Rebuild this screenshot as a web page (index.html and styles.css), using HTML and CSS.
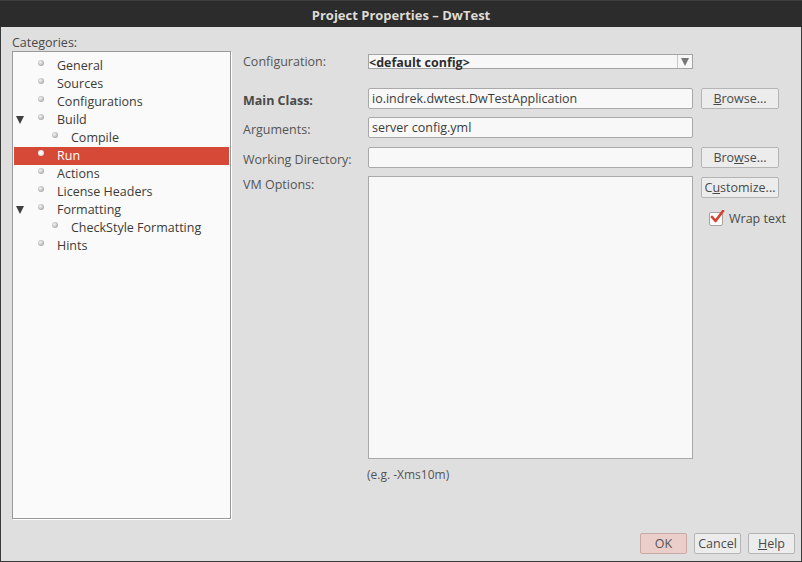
FILE: index.html
```html
<!DOCTYPE html>
<html>
<head>
<meta charset="utf-8">
<link rel="stylesheet" href="styles.css">
</head>
<body>
<div class="window">
  <div class="titlebar">Project Properties – DwTest</div>
  <div class="main">
    <div class="left">
      <div class="cat-label">Categories:</div>
      <div class="tree">
        <div class="node"><span class="exp"></span><span class="dot"></span>General</div>
        <div class="node"><span class="exp"></span><span class="dot"></span>Sources</div>
        <div class="node"><span class="exp"></span><span class="dot"></span>Configurations</div>
        <div class="node"><span class="exp open"></span><span class="dot"></span>Build</div>
        <div class="node child"><span class="exp"></span><span class="dot"></span>Compile</div>
        <div class="node sel"><span class="exp"></span><span class="dot"></span>Run</div>
        <div class="node"><span class="exp"></span><span class="dot"></span>Actions</div>
        <div class="node"><span class="exp"></span><span class="dot"></span>License Headers</div>
        <div class="node"><span class="exp open"></span><span class="dot"></span>Formatting</div>
        <div class="node child"><span class="exp"></span><span class="dot"></span>CheckStyle Formatting</div>
        <div class="node"><span class="exp"></span><span class="dot"></span>Hints</div>
      </div>
    </div>
    <div class="form">
      <div class="row r-config">
        <div class="label">Configuration:</div>
        <div class="combo"><span class="combo-text">&lt;default config&gt;</span><span class="combo-arrow"></span></div>
      </div>
      <div class="row r-main">
        <div class="label bold">Main Class:</div>
        <div class="field">io.indrek.dwtest.DwTestApplication</div>
        <button class="btn"><u>B</u>rowse...</button>
      </div>
      <div class="row r-args">
        <div class="label">Arguments:</div>
        <div class="field">server config.yml</div>
      </div>
      <div class="row r-work">
        <div class="label">Working Directory:</div>
        <div class="field"></div>
        <button class="btn">Bro<u>w</u>se...</button>
      </div>
      <div class="row r-vm">
        <div class="label top">VM Options:</div>
        <div class="area"></div>
        <div class="side">
          <button class="btn">C<u>u</u>stomize...</button>
          <label class="check"><span class="box"><svg width="16" height="14" viewBox="0 0 16 14"><path d="M3 7 L6.5 11 L14 1" fill="none" stroke="#d9412f" stroke-width="2.6" stroke-linecap="round" stroke-linejoin="round"/></svg></span>Wrap text</label>
        </div>
      </div>
      <div class="hint">(e.g. -Xms10m)</div>
    </div>
  </div>
  <div class="footer">
    <button class="btn fbtn ok">OK</button>
    <button class="btn fbtn">Cancel</button>
    <button class="btn fbtn"><u>H</u>elp</button>
  </div>
</div>
</body>
</html>
```

FILE: styles.css
```css
* { box-sizing: border-box; }
html, body { margin: 0; padding: 0; }
body {
  width: 802px;
  height: 562px;
  overflow: hidden;
  font-family: "Open Sans", "DejaVu Sans", sans-serif;
  font-size: 12.5px;
  color: #4a4a4a;
  background: #dfdfdf;
}
u { text-decoration: underline; text-underline-offset: 1px; }
.window {
  width: 802px;
  height: 562px;
  border: 1px solid #3a3a3a;
  border-top: none;
  background: #dfdfdf;
  display: flex;
  flex-direction: column;
}
.titlebar {
  height: 27px;
  margin: 0 -1px;
  background: #2c2c2c;
  border-top: 1px solid #3e3e3e;
  color: #dedbd4;
  font-weight: bold;
  font-size: 13px;
  display: flex;
  align-items: center;
  justify-content: center;
  padding-top: 1px;
}
.main {
  flex: 1;
  display: flex;
  padding: 8px 0 0 11px;
}
.left {
  width: 220px;
  display: flex;
  flex-direction: column;
}
.cat-label {
  height: 16px;
  line-height: 16px;
  color: #4a4a4a;
}
.tree {
  height: 468px;
  background: #fafafa;
  border: 1px solid #999;
  box-shadow: 1px 1px 0 #fff;
  padding: 5px 1px 0 1px;
  width: 219px;
}
.node {
  height: 18px;
  line-height: 18px;
  display: flex;
  align-items: center;
  color: #3c3b37;
  font-size: 12.5px;
}
.exp {
  width: 24px;
  flex: none;
  align-self: flex-start;
  height: 18px;
  display: block;
}
.exp.open::before {
  content: "";
  display: block;
  margin: 5px 0 0 2px;
  width: 0; height: 0;
  border-left: 4px solid transparent;
  border-right: 4px solid transparent;
  border-top: 8px solid #3f3f3f;
}
.dot {
  width: 6px;
  height: 6px;
  border-radius: 50%;
  background: radial-gradient(circle at 40% 40%, #f4f4f4 0, #bdbdbd 55%, #8a8a8a 100%);
  align-self: flex-start;
  margin-top: 3px;
  margin-right: 13px;
  flex: none;
}
.node.child .dot { margin-left: 14px; }
.node.sel { background: #d64937; color: #fff; }
.node.sel .dot { background: radial-gradient(circle at 40% 40%, #fff 0, #e8e8e8 60%, #bbb 100%); }

.form {
  margin-left: 11px;
  padding-top: 18px;
  display: flex;
  flex-direction: column;
}
.row {
  display: grid;
  grid-template-columns: 117px 325px 78px;
  column-gap: 8px;
  align-items: center;
}
.label { color: #555; white-space: nowrap; }
.r-main .label, .r-args .label, .r-work .label { padding-top: 3px; }
.label.bold { font-weight: bold; color: #4a4a4a; }
.label.top { align-self: start; margin-top: 0; }
.r-config { height: 15px; }
.r-main { margin-top: 20px; height: 21px; }
.r-args { margin-top: 8px; height: 21px; }
.r-work { margin-top: 9px; height: 21px; }
.r-vm { margin-top: 8px; align-items: start; }

.combo {
  height: 15px;
  border: 1px solid #a3a3a3;
  background: #f7f7f7;
  display: flex;
  align-items: center;
}
.combo-text {
  flex: 1;
  font-weight: bold;
  color: #2e2e2e;
  line-height: 13px;
  margin-top: 1px;
}
.combo-arrow {
  width: 15px;
  height: 13px;
  border-left: 1px solid #c8c8c8;
  display: flex;
  align-items: center;
  justify-content: center;
}
.combo-arrow::before {
  content: "";
  width: 0; height: 0;
  border-left: 4px solid transparent;
  border-right: 4px solid transparent;
  border-top: 8px solid #777;
}
.field {
  height: 21px;
  border: 1px solid #a9a9a9;
  border-radius: 2px;
  background: #f8f8f8;
  padding: 0 3px;
  line-height: 19px;
  color: #3c3c3c;
  font-size: 12.5px;
}
.area {
  height: 283px;
  border: 1px solid #a9a9a9;
  background: #f8f8f8;
}
.btn {
  font-family: inherit;
  font-size: 12.5px;
  color: #4a4a4a;
  height: 21px;
  padding: 0;
  border: 1px solid #b5b5b5;
  border-radius: 2px;
  background: #ececec;
  line-height: 19px;
  white-space: nowrap;
}
.side {
  display: flex;
  flex-direction: column;
  align-items: flex-start;
  gap: 12px;
  margin-top: 1px;
}
.side .btn { width: 78px; }
.check {
  display: flex;
  align-items: center;
  gap: 6px;
  margin-left: 8px;
  color: #4a4a4a;
  font-size: 12.5px;
  white-space: nowrap;
}
.box {
  width: 14px;
  height: 14px;
  border: 1px solid #a5a5a5;
  border-radius: 2px;
  background: #fbfbfb;
  position: relative;
  flex: none;
}
.box svg { position: absolute; left: -1px; top: -3px; }
.hint {
  margin-top: 7px;
  margin-left: 124px;
  color: #555;
  font-size: 12px;
}
.footer {
  height: 28px;
  display: flex;
  justify-content: flex-end;
  align-items: flex-start;
  padding-right: 6px;
  gap: 7px;
}
.fbtn { width: 47px; }
.ok { background: #ebcdca; color: #555; border-color: #c9a9a5; }
```
